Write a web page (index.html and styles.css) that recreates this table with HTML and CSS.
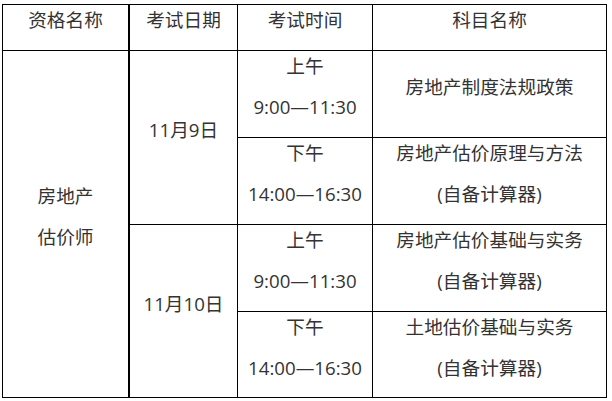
FILE: index.html
```html
<!DOCTYPE html>
<html lang="zh-CN">
<head>
<meta charset="utf-8">
<title>考试安排</title>
<link rel="stylesheet" href="styles.css">
</head>
<body>
<table class="exam">
  <colgroup>
    <col class="c1"><col class="c2"><col class="c3"><col class="c4">
  </colgroup>
  <thead>
    <tr class="head">
      <th class="col1"><p>资格名称</p></th>
      <th><p>考试日期</p></th>
      <th><p>考试时间</p></th>
      <th><p>科目名称</p></th>
    </tr>
  </thead>
  <tbody>
    <tr class="sub">
      <td class="col1" rowspan="4"><p>房地产</p><p>估价师</p></td>
      <td rowspan="2"><p>11月9日</p></td>
      <td><p>上午</p><p>9:00—11:30</p></td>
      <td><p>房地产制度法规政策</p></td>
    </tr>
    <tr class="sub">
      <td><p>下午</p><p>14:00—16:30</p></td>
      <td><p>房地产估价原理与方法</p><p>(自备计算器)</p></td>
    </tr>
    <tr class="sub">
      <td rowspan="2"><p>11月10日</p></td>
      <td><p>上午</p><p>9:00—11:30</p></td>
      <td><p>房地产估价基础与实务</p><p>(自备计算器)</p></td>
    </tr>
    <tr class="sub last">
      <td><p>下午</p><p>14:00—16:30</p></td>
      <td><p>土地估价基础与实务</p><p>(自备计算器)</p></td>
    </tr>
  </tbody>
</table>
</body>
</html>
```

FILE: styles.css
```css
html, body {
  margin: 0;
  padding: 0;
  background: #ffffff;
}

body {
  padding: 4px 0 0 2px;
  font-family: "Open Sans", "Noto Sans CJK SC", sans-serif;
  font-size: 18.67px;
  color: #333333;
}

.exam {
  border-collapse: separate;
  border-spacing: 0;
  table-layout: fixed;
  width: 605px;
  border-top: 1px solid #000;
  border-left: 1px solid #000;
}

.c1 { width: 127px; }
.c2 { width: 108px; }
.c3 { width: 135px; }
.c4 { width: 234px; }

.exam th,
.exam td {
  padding: 0 0 15px 0;
  border-right: 1px solid #000;
  border-bottom: 1px solid #000;
  text-align: center;
  vertical-align: middle;
  font-weight: 400;
  box-sizing: border-box;
}

.exam .col1 {
  border-right-width: 2px;
}

.head { height: 46px; }
.sub { height: 87px; }
.sub.last { height: 86px; }

.exam p {
  margin: 0;
  line-height: 28px;
  white-space: nowrap;
}

.exam p + p {
  margin-top: 13px;
}
```
